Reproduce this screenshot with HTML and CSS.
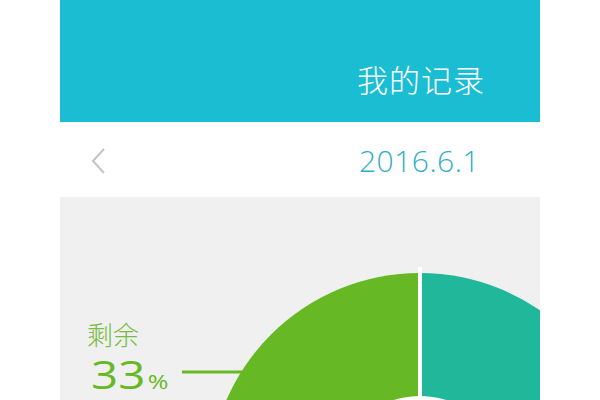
FILE: index.html
```html
<!DOCTYPE html>
<html lang="zh">
<head>
<meta charset="utf-8">
<title>我的记录</title>
<link rel="stylesheet" href="styles.css">
</head>
<body>
<div class="page">
  <header class="header">
    <h1 class="title">我的记录</h1>
  </header>
  <nav class="datebar">
    <svg class="back" width="16" height="26" viewBox="0 0 16 26"><path d="M13 1 L2 13 L13 25" fill="none" stroke="#c4c4c4" stroke-width="2"/></svg>
    <span class="date">2016.6.1</span>
  </nav>
  <section class="chart">
    <svg class="pie" width="480" height="203" viewBox="0 0 480 203">
      <path d="M360 76 A211 211 0 0 0 149 287 L360 287 Z" fill="#66b924"/>
      <path d="M360 76 A211 211 0 0 1 571 287 L360 287 Z" fill="#21b79b"/>
      <rect x="358" y="70" width="4" height="220" fill="#ffffff"/>
      <circle cx="360" cy="287" r="88" fill="#ffffff"/>
      <rect x="122" y="173.5" width="60" height="3" fill="#66b924"/>
    </svg>
    <div class="legend">
      <div class="legend-name">剩余</div>
      <div class="legend-value">33<span class="pct">%</span></div>
    </div>
  </section>
</div>
</body>
</html>
```
FILE: styles.css
```css
html, body {
  margin: 0;
  padding: 0;
  background: #ffffff;
}
body {
  font-family: "Open Sans", "Noto Sans CJK SC", sans-serif;
}
.page {
  width: 480px;
  margin-left: 60px;
  height: 400px;
  overflow: hidden;
}
.header {
  height: 122px;
  background: #1bbdd3;
  display: flex;
  justify-content: flex-end;
  align-items: flex-start;
  padding-right: 55px;
  box-sizing: border-box;
}
.title {
  margin: 59px 0 0 0;
  font-family: "Noto Sans CJK SC", sans-serif;
  font-weight: 300;
  font-size: 31px;
  line-height: 40px;
  color: #ffffff;
  letter-spacing: 1px;
}
.datebar {
  height: 75px;
  background: #ffffff;
  display: flex;
  align-items: center;
  justify-content: space-between;
  padding: 0 60px 0 31px;
}
.back {
  display: block;
  margin-top: 2px;
}
.date {
  font-family: "Open Sans", sans-serif;
  font-weight: 300;
  font-size: 30px;
  color: #30aec6;
  letter-spacing: 0.5px;
  margin-top: 2px;
}
.chart {
  display: grid;
  align-items: start;
  justify-items: start;
  background: #f0f0f0;
  height: 203px;
}
.pie {
  grid-area: 1 / 1;
  display: block;
}
.legend {
  grid-area: 1 / 1;
  margin: 122px 0 0 27px;
  color: #66b924;
}
.legend-name {
  font-family: "Noto Sans CJK SC", sans-serif;
  font-weight: 300;
  font-size: 26px;
  line-height: 29px;
  color: #78bc42;
}
.legend-value {
  font-family: "Open Sans", sans-serif;
  font-weight: 400;
  font-size: 38px;
  line-height: 52px;
  margin: 0 0 0 4px;
  transform: scaleX(1.25);
  transform-origin: left center;
  white-space: nowrap;
}
.pct {
  font-size: 20px;
  margin-left: 2px;
}
```
